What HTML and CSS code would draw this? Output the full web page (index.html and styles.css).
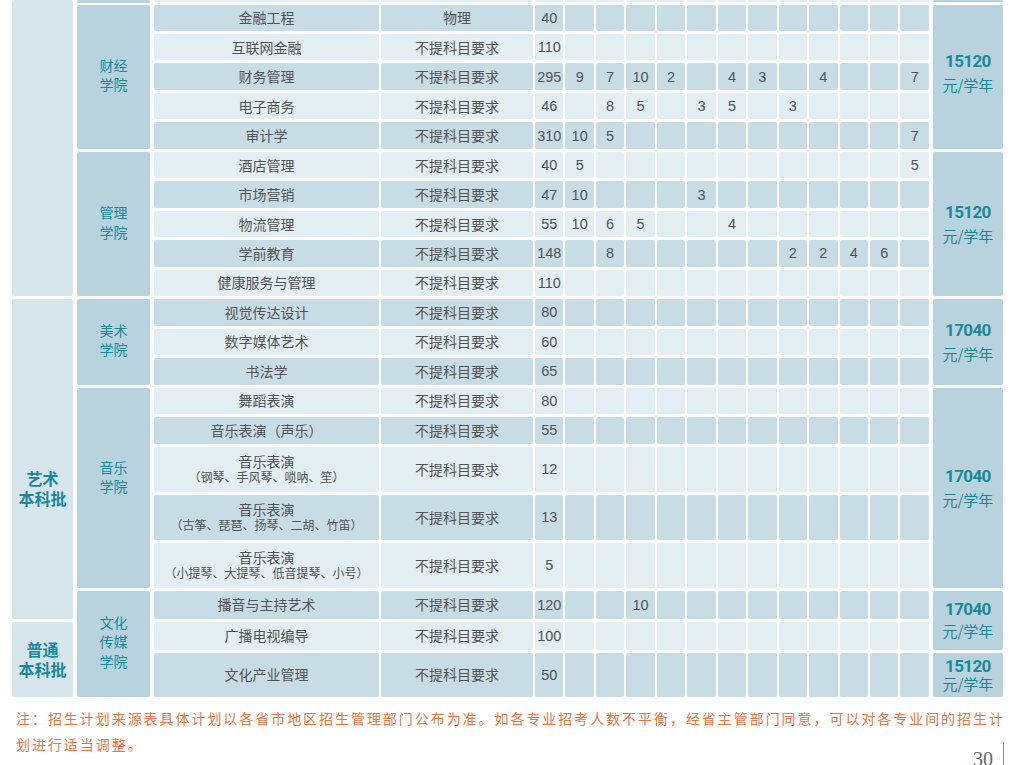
FILE: index.html
```html
<!DOCTYPE html>
<html lang="zh-CN">
<head>
<meta charset="utf-8">
<title>招生计划</title>
<link rel="stylesheet" href="styles.css">
</head>
<body>
<div class="page">
  <div class="sheet">
    <div class="batch batch-prev"></div>
    <div class="batch batch-art"><span>艺术</span><span>本科批</span></div>
    <div class="batch batch-gen"><span>普通</span><span>本科批</span></div>

    <div class="college col-prev"></div>
    <div class="college col-fin"><span>财经</span><span>学院</span></div>
    <div class="college col-mgmt"><span>管理</span><span>学院</span></div>
    <div class="college col-fine"><span>美术</span><span>学院</span></div>
    <div class="college col-music"><span>音乐</span><span>学院</span></div>
    <div class="college col-media"><span>文化</span><span>传媒</span><span>学院</span></div>

    <div class="fee fee-prev"></div>
    <div class="fee fee-fin"><div class="amt">15120</div><div class="unit">元/学年</div></div>
    <div class="fee fee-mgmt"><div class="amt">15120</div><div class="unit">元/学年</div></div>
    <div class="fee fee-fine"><div class="amt">17040</div><div class="unit">元/学年</div></div>
    <div class="fee fee-music"><div class="amt">17040</div><div class="unit">元/学年</div></div>
    <div class="fee fee-media"><div class="amt">17040</div><div class="unit">元/学年</div></div>
    <div class="fee fee-cult"><div class="amt">15120</div><div class="unit">元/学年</div></div>

    <div class="row light sliver"><div class="c"></div><div class="c"></div><div class="c"></div><div class="c"></div><div class="c"></div><div class="c"></div><div class="c"></div><div class="c"></div><div class="c"></div><div class="c"></div><div class="c"></div><div class="c"></div><div class="c"></div><div class="c"></div><div class="c"></div></div>

    <div class="row dark"><div class="c name">金融工程</div><div class="c subj">物理</div><div class="c">40</div><div class="c"></div><div class="c"></div><div class="c"></div><div class="c"></div><div class="c"></div><div class="c"></div><div class="c"></div><div class="c"></div><div class="c"></div><div class="c"></div><div class="c"></div><div class="c"></div></div>
    <div class="row light"><div class="c name">互联网金融</div><div class="c subj">不提科目要求</div><div class="c">110</div><div class="c"></div><div class="c"></div><div class="c"></div><div class="c"></div><div class="c"></div><div class="c"></div><div class="c"></div><div class="c"></div><div class="c"></div><div class="c"></div><div class="c"></div><div class="c"></div></div>
    <div class="row dark"><div class="c name">财务管理</div><div class="c subj">不提科目要求</div><div class="c">295</div><div class="c">9</div><div class="c">7</div><div class="c">10</div><div class="c">2</div><div class="c"></div><div class="c">4</div><div class="c">3</div><div class="c"></div><div class="c">4</div><div class="c"></div><div class="c"></div><div class="c">7</div></div>
    <div class="row light"><div class="c name">电子商务</div><div class="c subj">不提科目要求</div><div class="c">46</div><div class="c"></div><div class="c">8</div><div class="c">5</div><div class="c"></div><div class="c">3</div><div class="c">5</div><div class="c"></div><div class="c">3</div><div class="c"></div><div class="c"></div><div class="c"></div><div class="c"></div></div>
    <div class="row dark"><div class="c name">审计学</div><div class="c subj">不提科目要求</div><div class="c">310</div><div class="c">10</div><div class="c">5</div><div class="c"></div><div class="c"></div><div class="c"></div><div class="c"></div><div class="c"></div><div class="c"></div><div class="c"></div><div class="c"></div><div class="c"></div><div class="c">7</div></div>
    <div class="row light"><div class="c name">酒店管理</div><div class="c subj">不提科目要求</div><div class="c">40</div><div class="c">5</div><div class="c"></div><div class="c"></div><div class="c"></div><div class="c"></div><div class="c"></div><div class="c"></div><div class="c"></div><div class="c"></div><div class="c"></div><div class="c"></div><div class="c">5</div></div>
    <div class="row dark"><div class="c name">市场营销</div><div class="c subj">不提科目要求</div><div class="c">47</div><div class="c">10</div><div class="c"></div><div class="c"></div><div class="c"></div><div class="c">3</div><div class="c"></div><div class="c"></div><div class="c"></div><div class="c"></div><div class="c"></div><div class="c"></div><div class="c"></div></div>
    <div class="row light"><div class="c name">物流管理</div><div class="c subj">不提科目要求</div><div class="c">55</div><div class="c">10</div><div class="c">6</div><div class="c">5</div><div class="c"></div><div class="c"></div><div class="c">4</div><div class="c"></div><div class="c"></div><div class="c"></div><div class="c"></div><div class="c"></div><div class="c"></div></div>
    <div class="row dark"><div class="c name">学前教育</div><div class="c subj">不提科目要求</div><div class="c">148</div><div class="c"></div><div class="c">8</div><div class="c"></div><div class="c"></div><div class="c"></div><div class="c"></div><div class="c"></div><div class="c">2</div><div class="c">2</div><div class="c">4</div><div class="c">6</div><div class="c"></div></div>
    <div class="row light"><div class="c name">健康服务与管理</div><div class="c subj">不提科目要求</div><div class="c">110</div><div class="c"></div><div class="c"></div><div class="c"></div><div class="c"></div><div class="c"></div><div class="c"></div><div class="c"></div><div class="c"></div><div class="c"></div><div class="c"></div><div class="c"></div><div class="c"></div></div>
    <div class="row dark"><div class="c name">视觉传达设计</div><div class="c subj">不提科目要求</div><div class="c">80</div><div class="c"></div><div class="c"></div><div class="c"></div><div class="c"></div><div class="c"></div><div class="c"></div><div class="c"></div><div class="c"></div><div class="c"></div><div class="c"></div><div class="c"></div><div class="c"></div></div>
    <div class="row light"><div class="c name">数字媒体艺术</div><div class="c subj">不提科目要求</div><div class="c">60</div><div class="c"></div><div class="c"></div><div class="c"></div><div class="c"></div><div class="c"></div><div class="c"></div><div class="c"></div><div class="c"></div><div class="c"></div><div class="c"></div><div class="c"></div><div class="c"></div></div>
    <div class="row dark"><div class="c name">书法学</div><div class="c subj">不提科目要求</div><div class="c">65</div><div class="c"></div><div class="c"></div><div class="c"></div><div class="c"></div><div class="c"></div><div class="c"></div><div class="c"></div><div class="c"></div><div class="c"></div><div class="c"></div><div class="c"></div><div class="c"></div></div>
    <div class="row light"><div class="c name">舞蹈表演</div><div class="c subj">不提科目要求</div><div class="c">80</div><div class="c"></div><div class="c"></div><div class="c"></div><div class="c"></div><div class="c"></div><div class="c"></div><div class="c"></div><div class="c"></div><div class="c"></div><div class="c"></div><div class="c"></div><div class="c"></div></div>
    <div class="row dark"><div class="c name">音乐表演（声乐）</div><div class="c subj">不提科目要求</div><div class="c">55</div><div class="c"></div><div class="c"></div><div class="c"></div><div class="c"></div><div class="c"></div><div class="c"></div><div class="c"></div><div class="c"></div><div class="c"></div><div class="c"></div><div class="c"></div><div class="c"></div></div>
    <div class="row light"><div class="c name two"><span class="main">音乐表演</span><span class="sub">（钢琴、手风琴、唢呐、笙）</span></div><div class="c subj">不提科目要求</div><div class="c">12</div><div class="c"></div><div class="c"></div><div class="c"></div><div class="c"></div><div class="c"></div><div class="c"></div><div class="c"></div><div class="c"></div><div class="c"></div><div class="c"></div><div class="c"></div><div class="c"></div></div>
    <div class="row dark"><div class="c name two"><span class="main">音乐表演</span><span class="sub">（古筝、琵琶、扬琴、二胡、竹笛）</span></div><div class="c subj">不提科目要求</div><div class="c">13</div><div class="c"></div><div class="c"></div><div class="c"></div><div class="c"></div><div class="c"></div><div class="c"></div><div class="c"></div><div class="c"></div><div class="c"></div><div class="c"></div><div class="c"></div><div class="c"></div></div>
    <div class="row light"><div class="c name two"><span class="main">音乐表演</span><span class="sub">（小提琴、大提琴、低音提琴、小号）</span></div><div class="c subj">不提科目要求</div><div class="c">5</div><div class="c"></div><div class="c"></div><div class="c"></div><div class="c"></div><div class="c"></div><div class="c"></div><div class="c"></div><div class="c"></div><div class="c"></div><div class="c"></div><div class="c"></div><div class="c"></div></div>
    <div class="row dark"><div class="c name">播音与主持艺术</div><div class="c subj">不提科目要求</div><div class="c">120</div><div class="c"></div><div class="c"></div><div class="c">10</div><div class="c"></div><div class="c"></div><div class="c"></div><div class="c"></div><div class="c"></div><div class="c"></div><div class="c"></div><div class="c"></div><div class="c"></div></div>
    <div class="row light"><div class="c name">广播电视编导</div><div class="c subj">不提科目要求</div><div class="c">100</div><div class="c"></div><div class="c"></div><div class="c"></div><div class="c"></div><div class="c"></div><div class="c"></div><div class="c"></div><div class="c"></div><div class="c"></div><div class="c"></div><div class="c"></div><div class="c"></div></div>
    <div class="row dark"><div class="c name">文化产业管理</div><div class="c subj">不提科目要求</div><div class="c">50</div><div class="c"></div><div class="c"></div><div class="c"></div><div class="c"></div><div class="c"></div><div class="c"></div><div class="c"></div><div class="c"></div><div class="c"></div><div class="c"></div><div class="c"></div><div class="c"></div></div>
  </div>

  <div class="note">注：招生计划来源表具体计划以各省市地区招生管理部门公布为准。如各专业招考人数不平衡，经省主管部门同意，可以对各专业间的招生计</div>
  <div class="foot">
    <div class="note note-end">划进行适当调整。</div>
    <div class="pg">30</div>
  </div>
</div>
</body>
</html>
```

FILE: styles.css
```css
html, body {
  margin: 0;
  padding: 0;
  overflow: hidden;
  background: #ffffff;
}
body {
  width: 1026px;
  height: 765px;
  font-family: "Liberation Sans", "Noto Sans CJK SC", sans-serif;
}
.page {
  padding-left: 12px;
}
.sheet {
  display: grid;
  grid-template-columns: 63px 75px 225px 152px repeat(13, 28.46px) 72px;
  grid-template-rows: 1.5px repeat(15, 26.47px) repeat(3, 45px) 28px 28px 44px;
  column-gap: 2px;
  row-gap: 3px;
}
.row {
  display: contents;
}
.c {
  display: flex;
  align-items: center;
  justify-content: center;
  font-size: 14.5px;
  color: #545454;
  border-radius: 2px;
  white-space: nowrap;
}
.dark > .c { background: #c8dce5; }
.light > .c { background: #e2eef1; }
.name, .subj {
  font-family: "Noto Sans CJK SC", sans-serif;
  font-size: 14px;
  padding-bottom: 1px;
}
.two {
  flex-direction: column;
}
.two .main {
  font-size: 14px;
  line-height: 16px;
}
.two .sub {
  font-size: 12px;
  line-height: 16px;
}

/* spanning blocks */
.batch, .college, .fee {
  display: flex;
  flex-direction: column;
  align-items: center;
  justify-content: center;
  text-align: center;
  color: #168a9c;
  font-family: "Noto Sans CJK SC", sans-serif;
  border-radius: 2px;
}
.batch {
  grid-column: 1;
  margin-right: 2px;
  background: #d6e6ec;
  font-size: 16px;
  font-weight: 700;
  line-height: 20px;
}
.college {
  grid-column: 2;
  margin-right: 2px;
  background: #b9d3de;
  font-size: 14px;
  line-height: 19.5px;
  padding-bottom: 3px;
}
.fee {
  grid-column: 18;
  margin-left: 2px;
  background: #b9d3de;
}
.amt {
  font-family: "Roboto", "Liberation Sans", sans-serif;
  font-weight: 700;
  font-size: 17px;
  letter-spacing: -0.6px;
  line-height: 24px;
}
.unit {
  font-size: 15px;
  line-height: 24px;
}

.batch-prev { grid-row: 1 / 12; }
.batch-art { grid-row: 12 / 21; padding-top: 58px; }
.batch-gen { grid-row: 21 / 23; }

.col-prev { grid-row: 1; }
.col-fin { grid-row: 2 / 7; }
.col-mgmt { grid-row: 7 / 12; }
.col-fine { grid-row: 12 / 15; }
.col-music { grid-row: 15 / 20; padding-bottom: 21px; }
.col-media { grid-row: 20 / 23; }

.fee-prev { grid-row: 1; }
.fee-fin { grid-row: 2 / 7; padding-bottom: 8px; }
.fee-mgmt { grid-row: 7 / 12; }
.fee-fine { grid-row: 12 / 15; }
.fee-music { grid-row: 15 / 20; }
.fee-media { grid-row: 20 / 22; }
.fee-media .amt, .fee-media .unit { line-height: 22px; }
.fee-cult { grid-row: 22 / 23; }
.fee-cult .amt, .fee-cult .unit { line-height: 17px; }

/* footnote */
.note {
  margin-top: 8px;
  padding-left: 4px;
  font-family: "Noto Sans CJK SC", sans-serif;
  font-size: 14px;
  letter-spacing: 1.95px;
  line-height: 26px;
  color: #e6773f;
  white-space: nowrap;
}
.foot {
  display: flex;
  justify-content: space-between;
  align-items: flex-start;
}
.note-end {
  margin-top: 0;
}
.pg {
  margin-top: 11px;
  margin-right: 22px;
  padding-top: 7px;
  padding-right: 10px;
  height: 40px;
  border-right: 1px solid #8a8a8a;
  font-family: "Liberation Serif", serif;
  font-size: 20px;
  line-height: 20px;
  color: #666666;
}
```
